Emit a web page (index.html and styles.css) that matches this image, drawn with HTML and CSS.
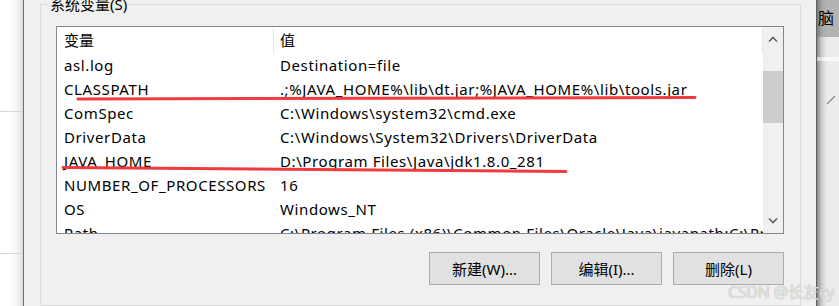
FILE: index.html
```html
<!DOCTYPE html>
<html lang="zh-CN">
<head>
    <meta charset="UTF-8">
    <meta name="viewport" content="width=device-width, initial-scale=1.0">
    <title>系统变量</title>
    <link rel="stylesheet" href="styles.css">
</head>
<body>
    <div class="screen">
        <div class="side-left">
            <div class="rule rule-top"></div>
            <div class="rule rule-bottom"></div>
        </div>

        <div class="dialog">
            <fieldset class="group">
                <legend>系统变量(S)</legend>

                <div class="listbox">
                    <div class="list">
                        <div class="list-head">
                            <div class="cell cell-name">变量</div>
                            <div class="cell cell-value">值</div>
                        </div>
                        <div class="row"><div class="cell cell-name">asl.log</div><div class="cell cell-value">Destination=file</div></div>
                        <div class="row"><div class="cell cell-name">CLASSPATH</div><div class="cell cell-value">.;%JAVA_HOME%\lib\dt.jar;%JAVA_HOME%\lib\tools.jar</div></div>
                        <div class="row"><div class="cell cell-name">ComSpec</div><div class="cell cell-value">C:\Windows\system32\cmd.exe</div></div>
                        <div class="row"><div class="cell cell-name">DriverData</div><div class="cell cell-value">C:\Windows\System32\Drivers\DriverData</div></div>
                        <div class="row"><div class="cell cell-name">JAVA_HOME</div><div class="cell cell-value">D:\Program Files\Java\jdk1.8.0_281</div></div>
                        <div class="row"><div class="cell cell-name">NUMBER_OF_PROCESSORS</div><div class="cell cell-value">16</div></div>
                        <div class="row"><div class="cell cell-name">OS</div><div class="cell cell-value">Windows_NT</div></div>
                        <div class="row"><div class="cell cell-name">Path</div><div class="cell cell-value">C:\Program Files (x86)\Common Files\Oracle\Java\javapath;C:\Program Files</div></div>
                    </div>
                    <div class="scrollbar">
                        <div class="scroll-btn">
                            <svg width="10" height="6" viewBox="0 0 10 6"><path d="M1 5.5 L5 1.5 L9 5.5" fill="none" stroke="#606060" stroke-width="1.6"/></svg>
                        </div>
                        <div class="scroll-thumb"></div>
                        <div class="scroll-track"></div>
                        <div class="scroll-btn">
                            <svg width="10" height="6" viewBox="0 0 10 6"><path d="M1 0.5 L5 4.5 L9 0.5" fill="none" stroke="#606060" stroke-width="1.6"/></svg>
                        </div>
                    </div>
                </div>

                <div class="buttons">
                    <button class="btn">新建(W)...</button>
                    <button class="btn">编辑(I)...</button>
                    <button class="btn">删除(L)</button>
                </div>
            </fieldset>
        </div>

        <div class="side-right">
            <div class="title-band">脑</div>
            <div class="band-light"></div>
            <div class="band-line"></div>
            <div class="band-body">
                <svg class="chevron" width="10" height="10" viewBox="0 0 10 10"><path d="M1 9 L9 1" fill="none" stroke="#8a8a8a" stroke-width="1.2"/></svg>
            </div>
        </div>

        <!-- red marks drawn over the list -->
        <svg class="marks" width="839" height="306" viewBox="0 0 839 306">
            <path d="M78 99 Q380 97.5 695 97.5" fill="none" stroke="#ef3b3f" stroke-width="3" stroke-linecap="round"/>
            <path d="M63 167.5 Q320 169 566 171.5" fill="none" stroke="#ef3b3f" stroke-width="3" stroke-linecap="round"/>
        </svg>

        <div class="watermark">CSDN @长友cy</div>
    </div>
</body>
</html>
```

FILE: styles.css
```css
html, body {
    margin: 0;
    padding: 0;
}
body {
    font-family: 'Noto Sans', 'Noto Sans CJK SC', sans-serif;
    font-size: 15px;
    color: #000;
    background-color: #fff;
}
.screen {
    position: relative;
    width: 839px;
    height: 306px;
    display: flex;
    overflow: hidden;
}

/* left: window behind the dialog */
.side-left {
    width: 23px;
    flex-shrink: 0;
    background: linear-gradient(to right, #fff 0, #fff 10px, #f1f1f1 18px, #dedede 23px);
}
.rule {
    height: 1px;
    background-color: #d6d6d6;
}
.rule-top {
    margin-top: 111px;
}
.rule-bottom {
    margin-top: 141px;
}

/* dialog */
.dialog {
    width: 792px;
    flex-shrink: 0;
    background-color: #f0f0f0;
    border-left: 1px solid #6f6f6f;
    border-right: 1px solid #5f5f5f;
}
.group {
    margin: -6px 15px 0 16px;
    padding: 12px 16px 20px 15px;
    border: 1px solid #dcdcdc;
    min-width: 0;
}
.group legend {
    margin-left: -8px;
    padding: 0 2px;
    line-height: 20px;
    font-size: 15px;
}

.listbox {
    display: flex;
    height: 206px;
    background-color: #fff;
    border: 1px solid #828790;
}
.list {
    flex: 1;
    min-width: 0;
    overflow: hidden;
}
.list-head {
    display: flex;
    height: 28px;
    align-items: center;
}
.list-head .cell {
    height: 24px;
    line-height: 23px;
    border-right: 1px solid #e5e5e5;
}
.row {
    display: flex;
    height: 24px;
    line-height: 21px;
    letter-spacing: 0.6px;
}
.cell {
    white-space: nowrap;
    overflow: hidden;
}
.cell-name {
    width: 210px;
    flex-shrink: 0;
    padding-left: 7px;
}
.list-head .cell-name {
    width: 209px;
}
.cell-value {
    flex: 1;
    padding-left: 6px;
}

.scrollbar {
    width: 20px;
    flex-shrink: 0;
    display: flex;
    flex-direction: column;
    background-color: #f0f0f0;
}
.scroll-btn {
    height: 24px;
    display: flex;
    align-items: center;
    justify-content: center;
}
.scroll-thumb {
    margin-top: 20px;
    height: 52px;
    background-color: #cdcdcd;
}
.scroll-track {
    flex: 1;
}

.buttons {
    display: flex;
    justify-content: flex-end;
    gap: 11px;
    margin-top: 18px;
}
.btn {
    width: 111px;
    height: 33px;
    padding: 0;
    font-family: 'Noto Sans', 'Noto Sans CJK SC', sans-serif;
    font-size: 15px;
    color: #000;
    background-color: #e1e1e1;
    border: 1px solid #adadad;
    border-radius: 0;
}

/* right: window behind, with its shadow */
.side-right {
    flex: 1;
    display: flex;
    flex-direction: column;
    background: linear-gradient(to right, #8a8a8a 0, #d0d0d0 5px, #ececec 10px);
}
.title-band {
    height: 37px;
    padding-left: 1px;
    line-height: 37px;
    font-size: 16px;
    background: linear-gradient(to right, #7a7a7a 0, #a8a8a8 5px, #b3b3b3 10px);
}
.band-light {
    height: 20px;
}
.band-line {
    height: 4px;
    background: linear-gradient(to right, #c8c8c8 0, #f8f8f8 8px);
}
.band-body {
    flex: 1;
    padding: 34px 0 0 9px;
}
.band-body .chevron {
    display: block;
}

.marks {
    position: absolute;
    left: 0;
    top: 0;
    pointer-events: none;
}
.watermark {
    position: absolute;
    left: 728px;
    top: 279px;
    font-size: 16px;
    color: rgba(235, 235, 235, 0.9);
    text-shadow: 0 0 1px #9a9a9a;
    letter-spacing: -0.3px;
}
```
